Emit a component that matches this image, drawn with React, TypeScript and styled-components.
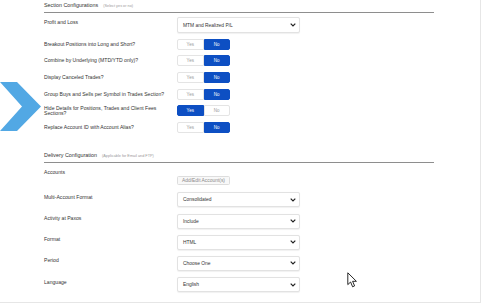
import styled, { createGlobalStyle } from "styled-components";

const BLUE = "#0d4fc3";
const TEXT = "#333333";

const GlobalStyle = createGlobalStyle`
  html, body {
    margin: 0;
    padding: 0;
    background: #ffffff;
    font-family: "Liberation Sans", Arial, sans-serif;
  }
`;

const toggles = [
  { label: "Breakout Positions into Long and Short?", yes: false },
  { label: "Combine by Underlying (MTD/YTD only)?", yes: false },
  { label: "Display Canceled Trades?", yes: false },
  { label: "Group Buys and Sells per Symbol in Trades Section?", yes: false },
  {
    label: "Hide Details for Positions, Trades and Client Fees Sections?",
    yes: true,
  },
  { label: "Replace Account ID with Account Alias?", yes: false },
];

const deliverySelects = [
  { label: "Multi-Account Format", value: "Consolidated" },
  { label: "Activity at Paxos", value: "Include" },
  { label: "Format", value: "HTML" },
  { label: "Period", value: "Choose One" },
  { label: "Language", value: "English" },
];

export default function App() {
  return (
    <>
      <GlobalStyle />
      <Panel>
        <Content>
          <Section>
            <SectionHeader>
              <SectionTitle>Section Configurations</SectionTitle>
              <SectionHint>(Select yes or no)</SectionHint>
            </SectionHeader>
            <Rows $gap={5.7} $top={4}>
              <Row>
                <SelectLabel>Profit and Loss</SelectLabel>
                <Select $h={16}>
                  <span>MTM and Realized P/L</span>
                  <Chevron />
                </Select>
              </Row>
              {toggles.map((t) => (
                <ToggleRow key={t.label}>
                  <ToggleLabel>{t.label}</ToggleLabel>
                  <Toggle>
                    <ToggleOption $active={t.yes}>Yes</ToggleOption>
                    <ToggleOption $active={!t.yes}>No</ToggleOption>
                  </Toggle>
                </ToggleRow>
              ))}
            </Rows>
          </Section>

          <Section $top={17}>
            <SectionHeader>
              <SectionTitle>Delivery Configuration</SectionTitle>
              <SectionHint>(Applicable for Email and FTP)</SectionHint>
            </SectionHeader>
            <Rows $gap={6.2} $top={4}>
              <Row>
                <SelectLabel>Accounts</SelectLabel>
                <div>
                  <AddButton>Add/Edit Account(s)</AddButton>
                </div>
              </Row>
              {deliverySelects.map((s) => (
                <Row key={s.label}>
                  <SelectLabel>{s.label}</SelectLabel>
                  <Select $h={15}>
                    <span>{s.value}</span>
                    <Chevron />
                  </Select>
                </Row>
              ))}
            </Rows>
          </Section>
        </Content>

        <Pointer>
          <svg width="48" height="49" viewBox="0 0 48 49">
            <polygon
              points="0,0 17,0 41,24.5 17,49 0,49 22,24.5"
              fill="#52a8e4"
            />
          </svg>
        </Pointer>

        <Cursor>
          <svg width="11" height="16" viewBox="0 0 11 16">
            <path
              d="M0.8 0.8 L0.8 12.6 L3.6 10 L5.6 14.8 L7.6 13.9 L5.6 9.3 L9.4 9.3 Z"
              fill="#ffffff"
              stroke="#111111"
              strokeWidth="0.9"
              strokeLinejoin="round"
            />
          </svg>
        </Cursor>
      </Panel>
    </>
  );
}

const Chevron = () => (
  <svg width="6" height="4" viewBox="0 0 6 4">
    <polyline
      points="0.7,0.7 3,3 5.3,0.7"
      fill="none"
      stroke="#222222"
      strokeWidth="1.2"
    />
  </svg>
);

const Panel = styled.div`
  position: relative;
  width: 481px;
  height: 303px;
  box-sizing: border-box;
  border-right: 1px solid #e6e6e6;
  border-bottom: 1px solid #e6e6e6;
  overflow: hidden;
`;

const Content = styled.div`
  width: 390px;
  padding-left: 44px;
`;

const Section = styled.div<{ $top?: number }>`
  margin-top: ${({ $top }) => $top ?? 0}px;
`;

const SectionHeader = styled.div`
  display: flex;
  align-items: baseline;
  padding: 2px 0 3px;
  border-bottom: 1px solid #8e8e8e;
`;

const SectionTitle = styled.span`
  font-size: 5.4px;
  line-height: 7px;
  color: ${TEXT};
`;

const SectionHint = styled.span`
  margin-left: 5px;
  font-size: 3.8px;
  color: #9a9a9a;
`;

const Rows = styled.div<{ $gap: number; $top: number }>`
  display: flex;
  flex-direction: column;
  gap: ${({ $gap }) => $gap}px;
  margin-top: ${({ $top }) => $top}px;
`;

const Row = styled.div`
  display: grid;
  grid-template-columns: 133px 1fr;
  align-items: start;
`;

const ToggleRow = styled(Row)`
  align-items: center;
`;

const SelectLabel = styled.div`
  padding-top: 1.5px;
  font-size: 5.1px;
  line-height: 6px;
  color: ${TEXT};
`;

const ToggleLabel = styled.div`
  font-size: 5.1px;
  line-height: 5px;
  color: ${TEXT};
  white-space: pre-line;
`;

const Select = styled.div<{ $h: number }>`
  display: flex;
  align-items: center;
  justify-content: space-between;
  box-sizing: border-box;
  width: 123px;
  height: ${({ $h }) => $h}px;
  padding: 0 3.5px 0 5px;
  border: 1px solid #e2e2e2;
  border-radius: 2px;
  box-shadow: 0 0.5px 1px rgba(0, 0, 0, 0.06);
  font-size: 4.9px;
  color: ${TEXT};
  background: #ffffff;
`;

const Toggle = styled.div`
  display: flex;
  width: 53px;
  height: 11px;
`;

const ToggleOption = styled.div<{ $active: boolean }>`
  flex: 1;
  display: flex;
  align-items: center;
  justify-content: center;
  box-sizing: border-box;
  font-size: 4.5px;
  border: 1px solid ${({ $active }) => ($active ? BLUE : "#e4e4e4")};
  background: ${({ $active }) => ($active ? BLUE : "#ffffff")};
  color: ${({ $active }) => ($active ? "#ffffff" : "#9a9a9a")};
  &:first-child {
    border-radius: 2px 0 0 2px;
  }
  &:last-child {
    border-radius: 0 2px 2px 0;
  }
`;

const AddButton = styled.div`
  display: inline-flex;
  align-items: center;
  box-sizing: border-box;
  height: 9px;
  margin-top: 9px;
  padding: 0 4px;
  border: 1px solid #dddddd;
  border-radius: 1.5px;
  background: #f8f8f8;
  font-size: 4.9px;
  color: #8a8a8a;
`;

const Pointer = styled.div`
  position: absolute;
  left: 0;
  top: 82px;
  line-height: 0;
`;

const Cursor = styled.div`
  position: absolute;
  left: 347px;
  top: 272px;
  line-height: 0;
`;
